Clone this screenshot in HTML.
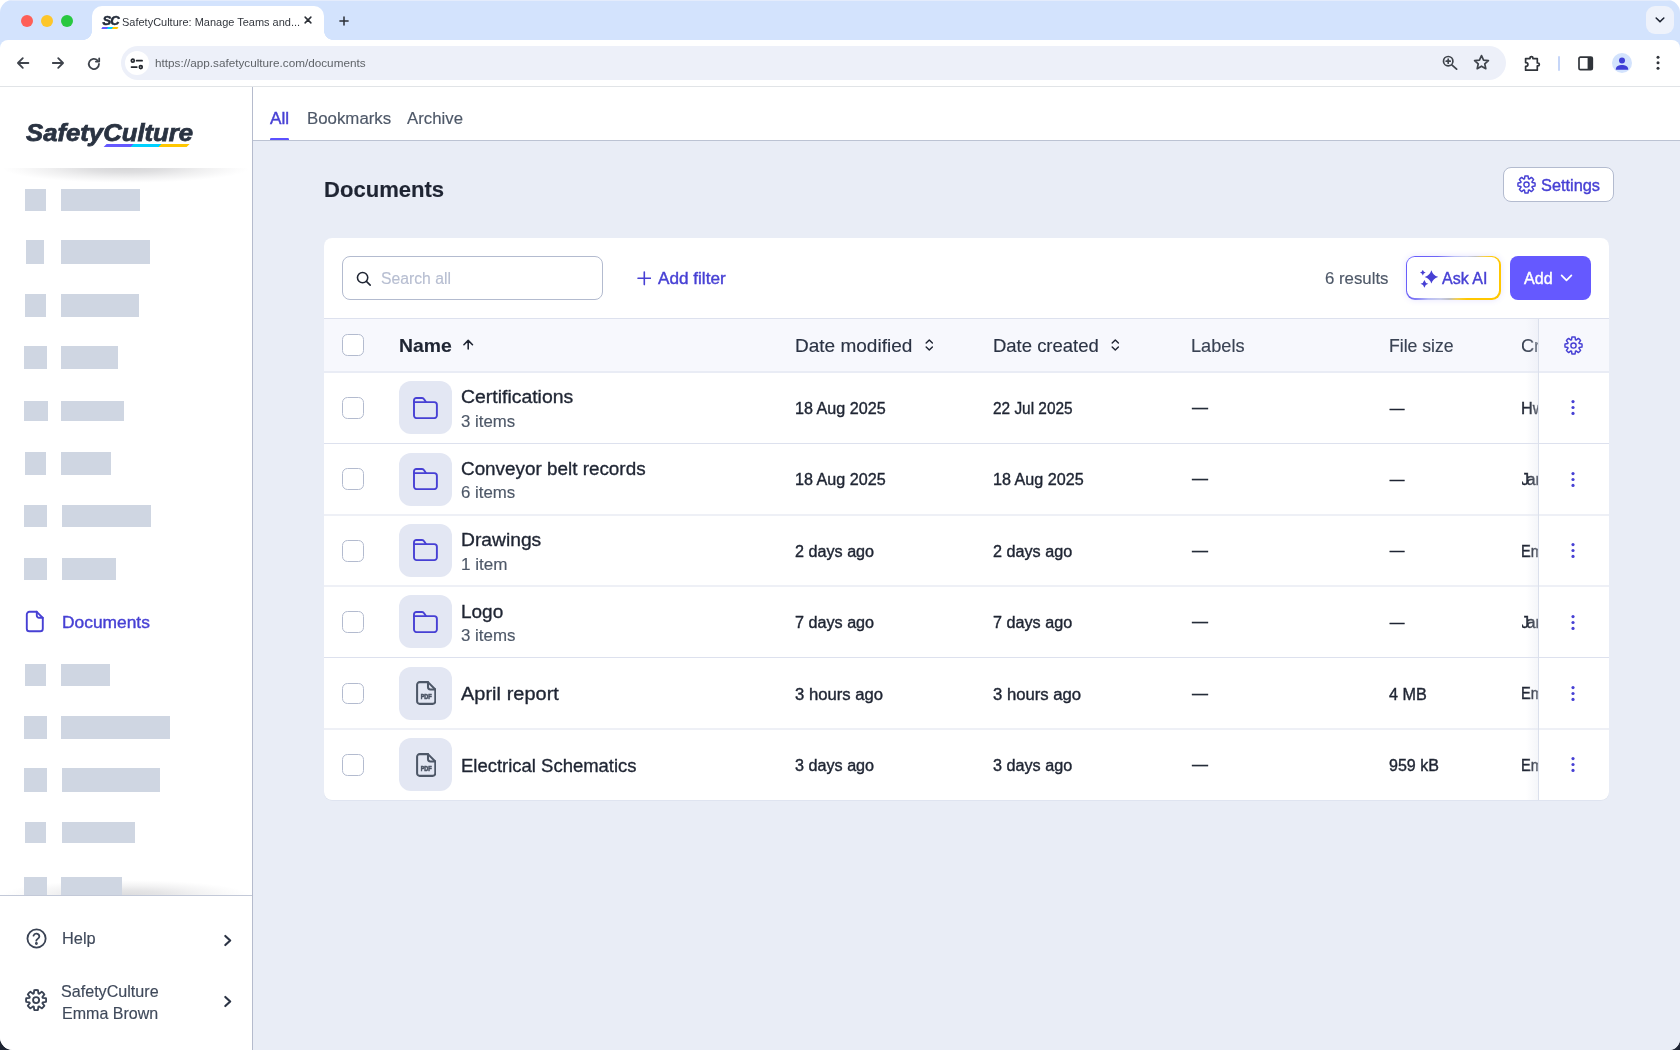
<!DOCTYPE html>
<html lang="en">
<head>
<meta charset="utf-8">
<title>SafetyCulture: Manage Teams and...</title>
<style>
*{box-sizing:border-box;margin:0;padding:0}
html,body{width:1680px;height:1050px;overflow:hidden;background:#fff;font-family:"Liberation Sans",sans-serif;color:#1f2533}
#win{position:absolute;left:0;top:0;width:1680px;height:1050px;overflow:hidden;background:linear-gradient(#fff 0 50%,#1f2533 50%)}
#frame{position:absolute;left:0;top:0;width:1680px;height:1050px;border-radius:12.5px 12.5px 11px 13px;overflow:hidden;background:#fff;will-change:transform}
.abs{position:absolute}
.t{position:absolute;white-space:nowrap;line-height:1;transform-origin:0 50%;-webkit-text-stroke:.15px currentColor}
.med{-webkit-text-stroke:.38px currentColor}
.med2{-webkit-text-stroke:.33px currentColor}
.logo{-webkit-text-stroke:.75px currentColor}
.dash{-webkit-text-stroke:.35px currentColor}
.ns{-webkit-text-stroke:0}
#tabbar{position:absolute;left:0;top:0;width:1680px;height:50px;background:#d3e3fd}
.tl{position:absolute;top:14.5px;width:12.2px;height:12.2px;border-radius:50%}
#tab{position:absolute;left:92.4px;top:6.3px;width:231.8px;height:34px;background:#fff;border-radius:10px 10px 0 0}
#tab:before,#tab:after{content:"";position:absolute;bottom:0;width:9px;height:9px}
#tab:before{left:-9px;background:radial-gradient(circle at 0 0,rgba(255,255,255,0) 8.6px,#fff 9.2px)}
#tab:after{right:-9px;background:radial-gradient(circle at 100% 0,rgba(255,255,255,0) 8.6px,#fff 9.2px)}
#toolbar{position:absolute;left:0;top:40px;width:1680px;height:46px;background:#fff;border-radius:8px 8px 0 0}
#hline{position:absolute;left:0;top:86px;width:1680px;height:1px;background:#e1e4e7}
#urlbar{position:absolute;left:120.6px;top:6px;width:1385px;height:34px;border-radius:17px;background:#edf0f9}
#side{position:absolute;left:0;top:87px;width:252px;height:963px;background:#fff}
#sideborder{position:absolute;left:252px;top:87px;width:1px;height:963px;background:#b5bbcd}
.sk{position:absolute;background:#cfd6e2}
#main{position:absolute;left:253px;top:87px;width:1427px;height:963px;background:#e9edf6}
#tabs{position:absolute;left:253px;top:87px;width:1427px;height:54px;background:#fff;border-bottom:1px solid #bcc3d3}
.btn{border:1px solid #b3bbcf;border-radius:8px;background:#fff}
#card{position:absolute;left:324px;top:238px;width:1285px;height:562px;background:#fff;border-radius:8px;box-shadow:0 .6px 0 0 rgba(205,211,226,.6)}
.cb{width:21.8px;height:21.8px;border:1px solid #b3bbcf;border-radius:5.5px;background:#fff}
</style>
</head>
<body>
<div id="win"><div id="frame">
<header>
<div id="tabbar"><div class="abs" style="left:0;top:0;width:1680px;height:1px;background:#e4ecfc"></div>
<div class="tl" style="left:20.7px;background:#fe5f57"></div>
<div class="tl" style="left:40.7px;background:#fdc62a"></div>
<div class="tl" style="left:60.7px;background:#28c840"></div>
<div id="tab"></div>
<div class="abs" style="left:102px;top:13.5px;width:18px;height:16px">
<span class="abs" style="left:0.6px;top:.4px;font:italic bold 13px/13px 'Liberation Sans',sans-serif;letter-spacing:-1.1px;color:#232b3a;-webkit-text-stroke:.55px #232b3a">SC</span>
<span class="abs" style="left:0.4px;top:13px;width:15.6px;height:1.5px;transform:skewX(-30deg);background:linear-gradient(90deg,#6559ff 0 36%,#00d1ff 36% 68%,#ffc700 68%)"></span>
</div>
<span class="t ns" id="t0" style="left:122.45px;top:16.72px;font-size:11.20px;color:#33373e;transform:scaleX(0.9819);">SafetyCulture: Manage Teams and...</span>
<svg class="abs" style="left:303.30px;top:15.40px" width="10.00" height="10.00" viewBox="0 0 10 10" fill="none" stroke="#2b2f36" stroke-width="1.5" stroke-linecap="round" stroke-linejoin="round"><path d="M2.1 2.1 7.9 7.9M7.9 2.1 2.1 7.9"/></svg>
<svg class="abs" style="left:338.20px;top:14.60px" width="12.00" height="12.00" viewBox="0 0 12 12" fill="none" stroke="#2b2f36" stroke-width="1.5" stroke-linecap="round" stroke-linejoin="round"><path d="M6 1.9V10.1M1.9 6H10.1"/></svg>
<div class="abs" style="left:1646px;top:6px;width:28px;height:27.6px;border-radius:9px;background:#eef2fb"></div>
<svg class="abs" style="left:1654.80px;top:15.40px" width="10.00" height="10.00" viewBox="0 0 10 10" fill="none" stroke="#1f2533" stroke-width="1.6" stroke-linecap="round" stroke-linejoin="round"><path d="M1.2 3 5 6.8 8.8 3"/></svg>
</div>
<div id="toolbar">
<div id="urlbar"></div>
<div class="abs" style="left:125px;top:11px;width:24px;height:24px;border-radius:50%;background:#fff"></div>
</div>
<div id="hline"></div>
<svg class="abs" style="left:15.50px;top:56.25px" width="14.00" height="14.00" viewBox="0 0 14 14" fill="none" stroke="#3f444c" stroke-width="1.8" stroke-linecap="round" stroke-linejoin="round"><path d="M12.4 7H2.1M6.8 2.15 1.95 7l4.85 4.85"/></svg>
<svg class="abs" style="left:51.00px;top:56.25px" width="14.00" height="14.00" viewBox="0 0 14 14" fill="none" stroke="#3f444c" stroke-width="1.8" stroke-linecap="round" stroke-linejoin="round"><path d="M1.8 7h10.1M7.2 2.15 12.05 7l-4.85 4.85"/></svg>
<svg class="abs" style="left:87.40px;top:56.60px" width="14.00" height="14.00" viewBox="0 0 14 14" fill="none" stroke="#3f444c" stroke-width="1.8" stroke-linecap="round" stroke-linejoin="round"><path d="M12 7A5.1 5.1 0 1 1 10.5 3.3"/><path d="M12.2 1.3V4.6H8.9" /></svg>
<svg class="abs" style="left:130.00px;top:56.50px" width="14.00" height="13.00" viewBox="0 0 14 13" fill="none" stroke="#23272e" stroke-width="1.7" stroke-linecap="round" stroke-linejoin="round"><circle cx="2.8" cy="3.65" r="1.45"/><path d="M6.6 3.65H12.1M1.5 10.1H6.8"/><circle cx="10.8" cy="10.1" r="1.45"/></svg>
<span class="t ns" id="t1" style="left:155.01px;top:56.88px;font-size:11.60px;color:#5f6368;transform:scaleX(1.0116);">https://app.safetyculture.com/documents</span>
<svg class="abs" style="left:1441.50px;top:54.90px" width="16.00" height="15.00" viewBox="0 0 16 15" fill="none" stroke="#3f444c" stroke-width="1.7" stroke-linecap="round" stroke-linejoin="round"><circle cx="6.2" cy="6.2" r="4.7"/><path d="M9.8 9.8 14.6 14.2M6.2 4.2V8.2M4.2 6.2H8.2" /></svg>
<svg class="abs" style="left:1473.40px;top:54.20px" width="17.00" height="16.00" viewBox="0 0 17 16" fill="none" stroke="#3f444c" stroke-width="1.7" stroke-linecap="round" stroke-linejoin="round"><path d="M8.5 1.6 10.55 6.1 15.4 6.6 11.75 9.9 12.8 14.7 8.5 12.2 4.2 14.7 5.25 9.9 1.6 6.6 6.45 6.1Z"/></svg>
<svg class="abs" style="left:1523.30px;top:53.60px" width="19.00" height="17.50" viewBox="0 0 19 17.5" fill="none" stroke="#30343a" stroke-width="1.7" stroke-linecap="round" stroke-linejoin="round"><path d="M2.6 4.6H7V4a1.45 1.45 0 0 1 2.9 0V4.6H14.3V9H14.9a1.45 1.45 0 0 1 0 2.9H14.3V16.2H2.6V12.4H3a1.9 1.9 0 0 0 0-3.8H2.6Z"/></svg>
<div class="abs" style="left:1558.2px;top:55.5px;width:1.6px;height:15px;border-radius:1px;background:#c6d6f8"></div>
<svg class="abs" style="left:1578.30px;top:55.60px" width="15.50" height="15.00" viewBox="0 0 15.5 15" ><rect x="1" y="1.2" width="13.3" height="12.4" rx="1.4" fill="none" stroke="#30343a" stroke-width="1.7"/><path d="M9.6 1.2H14.3V13.6H9.6Z" fill="#30343a"/></svg>
<div class="abs" style="left:1612px;top:53px;width:20px;height:20px;border-radius:50%;background:#d3e3fd;overflow:hidden"></div>
<svg class="abs" style="left:1612.00px;top:53.00px" width="20.00" height="20.00" viewBox="0 0 20 20" ><circle cx="10" cy="7.6" r="3" fill="#3f3fd6"/><path d="M3.8 16.2c0-3 3.2-4.2 6.2-4.2s6.2 1.2 6.2 4.2v.6H3.8Z" fill="#3f3fd6"/></svg>
<svg class="abs" style="left:1655.60px;top:54.90px" width="4.00" height="16.00" viewBox="0 0 4 16" fill="#30343a"><circle cx="2" cy="2.3" r="1.5"/><circle cx="2" cy="7.8" r="1.5"/><circle cx="2" cy="13.3" r="1.5"/></svg>
</header>
<aside>
<div id="side">
</div>
<span class="t logo" id="t2" style="left:25.71px;top:120.75px;font-size:24.40px;color:#2a3342;font-weight:700;font-style:italic;transform:scaleX(1.0536);">SafetyCulture</span>
<div class="abs" style="left:105px;top:143.9px;width:83px;height:3.2px;transform:skewX(-45deg);background:linear-gradient(90deg,#6559ff 0 33%,#00d1ff 33% 66%,#ffc700 66%)"></div>
<div class="abs" style="left:0;top:167.6px;width:252px;height:16px;background:radial-gradient(124px 15px at 126px 0,rgba(50,50,60,.2) 0,rgba(50,50,60,.155) 30%,rgba(50,50,60,.075) 62%,rgba(50,50,60,.02) 88%,rgba(50,50,60,0) 100%)"></div>
<div class="sk" style="left:25.0px;top:189.0px;width:20.8px;height:21.5px"></div>
<div class="sk" style="left:61.0px;top:189.0px;width:79.0px;height:21.5px"></div>
<div class="sk" style="left:26.0px;top:240.3px;width:18.0px;height:23.4px"></div>
<div class="sk" style="left:61.0px;top:240.3px;width:89.0px;height:23.4px"></div>
<div class="sk" style="left:25.0px;top:294.0px;width:20.8px;height:22.5px"></div>
<div class="sk" style="left:61.0px;top:294.0px;width:77.8px;height:22.5px"></div>
<div class="sk" style="left:24.0px;top:346.0px;width:23.0px;height:22.5px"></div>
<div class="sk" style="left:61.0px;top:346.0px;width:57.0px;height:22.5px"></div>
<div class="sk" style="left:24.0px;top:401.0px;width:24.0px;height:19.5px"></div>
<div class="sk" style="left:61.0px;top:401.0px;width:62.8px;height:19.5px"></div>
<div class="sk" style="left:25.0px;top:452.0px;width:20.8px;height:22.7px"></div>
<div class="sk" style="left:61.0px;top:452.0px;width:49.8px;height:22.7px"></div>
<div class="sk" style="left:24.0px;top:505.0px;width:23.0px;height:21.5px"></div>
<div class="sk" style="left:62.0px;top:505.0px;width:88.8px;height:21.5px"></div>
<div class="sk" style="left:24.0px;top:558.0px;width:23.0px;height:21.7px"></div>
<div class="sk" style="left:62.0px;top:558.0px;width:53.8px;height:21.7px"></div>
<div class="sk" style="left:25.0px;top:664.0px;width:20.8px;height:21.5px"></div>
<div class="sk" style="left:61.0px;top:664.0px;width:49.0px;height:21.5px"></div>
<div class="sk" style="left:24.0px;top:716.0px;width:23.0px;height:22.5px"></div>
<div class="sk" style="left:61.0px;top:716.0px;width:109.0px;height:22.5px"></div>
<div class="sk" style="left:24.0px;top:768.0px;width:23.0px;height:23.5px"></div>
<div class="sk" style="left:62.0px;top:768.0px;width:98.0px;height:23.5px"></div>
<div class="sk" style="left:25.0px;top:822.3px;width:20.8px;height:21.2px"></div>
<div class="sk" style="left:62.0px;top:822.3px;width:73.0px;height:21.2px"></div>
<div class="sk" style="left:24.0px;top:877.0px;width:23.0px;height:18.0px"></div>
<div class="sk" style="left:61.0px;top:877.0px;width:61.0px;height:18.0px"></div>
<div class="abs" style="left:0;top:879px;width:252px;height:16px;background:radial-gradient(124px 15px at 126px 16px,rgba(50,50,60,.17) 0,rgba(50,50,60,.13) 30%,rgba(50,50,60,.06) 62%,rgba(50,50,60,.015) 88%,rgba(50,50,60,0) 100%)"></div>
<div class="sk" style="left:24.0px;top:877.0px;width:23.0px;height:18.0px"></div>
<div class="sk" style="left:61.0px;top:877.0px;width:61.0px;height:18.0px"></div>
<div class="abs" style="left:0;top:895px;width:252px;height:1px;background:#c3c9d8"></div>
<svg class="abs" style="left:25.20px;top:610.00px" width="19.60" height="22.50" viewBox="0 0 19.6 22.5" fill="none" stroke="#4740d4" stroke-width="1.9" stroke-linecap="round" stroke-linejoin="round"><path d="M11.8 1.8H4.4A2.6 2.6 0 0 0 1.8 4.4V18.7A2.6 2.6 0 0 0 4.4 21.3H15.2A2.6 2.6 0 0 0 17.8 18.7V7.8Z"/><path d="M11.8 1.8V5.6A2.2 2.2 0 0 0 14 7.8H17.8"/></svg>
<span class="t med" id="t3" style="left:61.93px;top:614.33px;font-size:16.15px;color:#4740d4;transform:scaleX(1.0759);">Documents</span>
<svg class="abs" style="left:25.50px;top:928.40px" width="21.00" height="21.00" viewBox="0 0 21 21" fill="none" stroke="#3a4354" stroke-width="1.8" stroke-linecap="round" stroke-linejoin="round"><circle cx="10.55" cy="10.55" r="9.1"/><path d="M7.5 7.7a3 3 0 0 1 5.85.85c0 2-3.05 2.5-3.05 4.1"/><circle cx="10.4" cy="15.5" r=".55" fill="#3a4354"/></svg>
<span class="t" id="t4" style="left:61.98px;top:931.08px;font-size:15.73px;color:#3f495a;transform:scaleX(1.0405);">Help</span>
<svg class="abs" style="left:222.50px;top:933.50px" width="10.00" height="13.00" viewBox="0 0 10 13" fill="none" stroke="#2b3344" stroke-width="2.1" stroke-linecap="round" stroke-linejoin="round"><path d="M2.3 1.9 7.2 6.5 2.3 11.1"/></svg>
<svg class="abs" style="left:25.00px;top:989.40px" width="22.20" height="22.20" viewBox="0 0 22.20 22.20" fill="none" stroke="#3a4354" stroke-width="1.85" stroke-linejoin="round" stroke-linecap="round"><path d="M8.81 4.47L9.25 1.22A10.05 10.05 0 0 1 12.95 1.22L13.39 4.47L14.17 4.80L16.78 2.81A10.05 10.05 0 0 1 19.39 5.42L17.40 8.03L17.73 8.81L20.98 9.25A10.05 10.05 0 0 1 20.98 12.95L17.73 13.39L17.40 14.17L19.39 16.78A10.05 10.05 0 0 1 16.78 19.39L14.17 17.40L13.39 17.73L12.95 20.98A10.05 10.05 0 0 1 9.25 20.98L8.81 17.73L8.03 17.40L5.42 19.39A10.05 10.05 0 0 1 2.81 16.78L4.80 14.17L4.47 13.39L1.22 12.95A10.05 10.05 0 0 1 1.22 9.25L4.47 8.81L4.80 8.03L2.81 5.42A10.05 10.05 0 0 1 5.42 2.81L8.03 4.80Z"/><circle cx="11.10" cy="11.10" r="3.04"/></svg>
<span class="t" id="t5" style="left:61.49px;top:983.78px;font-size:15.73px;color:#3f495a;transform:scaleX(1.0250);">SafetyCulture</span>
<span class="t" id="t6" style="left:62.10px;top:1005.58px;font-size:15.73px;color:#3f495a;transform:scaleX(1.0197);">Emma Brown</span>
<svg class="abs" style="left:222.50px;top:995.30px" width="10.00" height="13.00" viewBox="0 0 10 13" fill="none" stroke="#2b3344" stroke-width="2.1" stroke-linecap="round" stroke-linejoin="round"><path d="M2.3 1.9 7.2 6.5 2.3 11.1"/></svg>
<div id="sideborder"></div>
</aside>
<main>
<div id="main"></div>
<div id="tabs"></div>
<span class="t med" id="t7" style="left:270.34px;top:110.79px;font-size:15.84px;color:#4740d4;transform:scaleX(1.0868);">All</span>
<span class="t" id="t8" style="left:306.56px;top:110.79px;font-size:15.84px;color:#4e5868;transform:scaleX(1.0633);">Bookmarks</span>
<span class="t" id="t9" style="left:406.86px;top:110.79px;font-size:15.84px;color:#4e5868;transform:scaleX(1.0606);">Archive</span>
<div class="abs" style="left:270.4px;top:137.6px;width:18.6px;height:2.9px;border-radius:1.2px 1.2px 0 0;background:#5b50ff"></div>
<span class="t" id="t10" style="left:324.00px;top:179.25px;font-size:21.80px;color:#1f2533;font-weight:700;transform:scaleX(1.0118);">Documents</span>
<div class="abs btn" style="left:1503.2px;top:167px;width:110.6px;height:35.2px"></div>
<svg class="abs" style="left:1517.40px;top:175.40px" width="19.00" height="19.00" viewBox="0 0 19.00 19.00" fill="none" stroke="#4740d4" stroke-width="1.45" stroke-linejoin="round" stroke-linecap="round"><path d="M7.54 3.83L7.92 1.05A8.60 8.60 0 0 1 11.08 1.05L11.46 3.83L12.12 4.10L14.36 2.40A8.60 8.60 0 0 1 16.60 4.64L14.90 6.88L15.17 7.54L17.95 7.92A8.60 8.60 0 0 1 17.95 11.08L15.17 11.46L14.90 12.12L16.60 14.36A8.60 8.60 0 0 1 14.36 16.60L12.12 14.90L11.46 15.17L11.08 17.95A8.60 8.60 0 0 1 7.92 17.95L7.54 15.17L6.88 14.90L4.64 16.60A8.60 8.60 0 0 1 2.40 14.36L4.10 12.12L3.83 11.46L1.05 11.08A8.60 8.60 0 0 1 1.05 7.92L3.83 7.54L4.10 6.88L2.40 4.64A8.60 8.60 0 0 1 4.64 2.40L6.88 4.10Z"/><circle cx="9.50" cy="9.50" r="2.60"/></svg>
<span class="t med" id="t11" style="left:1540.98px;top:177.42px;font-size:16.04px;color:#4740d4;transform:scaleX(1.0189);">Settings</span>
<div id="card"></div>
<div class="abs" style="left:342px;top:256px;width:260.5px;height:43.6px;border:1px solid #b3bbcf;border-radius:8px;background:#fff"></div>
<svg class="abs" style="left:356.00px;top:270.55px" width="16.00" height="16.00" viewBox="0 0 16 16" fill="none" stroke="#1f2533" stroke-width="1.55" stroke-linecap="round" stroke-linejoin="round"><circle cx="6.6" cy="6.6" r="5.15"/><path d="M10.4 10.4 14.2 14.1"/></svg>
<span class="t" id="t12" style="left:381.11px;top:270.99px;font-size:15.84px;color:#b7bed1;transform:scaleX(0.9941);">Search all</span>
<svg class="abs" style="left:636.50px;top:271.30px" width="14.60" height="14.60" viewBox="0 0 14.6 14.6" fill="none" stroke="#4740d4" stroke-width="1.6" stroke-linecap="round" stroke-linejoin="round"><path d="M7.3 1V13.6M1 7.3H13.6"/></svg>
<span class="t med" id="t13" style="left:657.84px;top:270.99px;font-size:15.84px;color:#4740d4;transform:scaleX(1.0840);">Add filter</span>
<span class="t" id="t14" style="left:1324.86px;top:270.99px;font-size:15.84px;color:#4e5868;transform:scaleX(1.0611);">6 results</span>
<div class="abs" style="left:1405.6px;top:256px;width:95px;height:43.8px;border-radius:9px;background:linear-gradient(122deg,#6559ff 0%,#6f66f5 26%,#b9bdf5 40%,#c9cdea 50%,#bfc0c4 57%,#f5d04a 64%,#ffc700 72%,#ffc700 100%);box-shadow:0 0 6px rgba(101,89,255,.16)"><div class="abs" style="left:1.4px;top:1.4px;right:1.4px;bottom:1.4px;border-radius:7.6px;background:#fff"></div></div>
<svg class="abs" style="left:1420.00px;top:269.80px" width="18.40" height="18.20" viewBox="0 0 18.4 18.2" fill="#4740d4"><path d="M11.40 0.20Q13.01 5.29 18.10 6.90Q13.01 8.51 11.40 13.60Q9.79 8.51 4.70 6.90Q9.79 5.29 11.40 0.20Z"/><path d="M2.80 -0.30Q3.38 2.02 5.70 2.60Q3.38 3.18 2.80 5.50Q2.22 3.18 -0.10 2.60Q2.22 2.02 2.80 -0.30Z"/><path d="M4.40 9.90Q5.18 13.02 8.30 13.80Q5.18 14.58 4.40 17.70Q3.62 14.58 0.50 13.80Q3.62 13.02 4.40 9.90Z"/></svg>
<span class="t med" id="t15" style="left:1442.40px;top:270.99px;font-size:15.84px;color:#4740d4;transform:scaleX(1.0141);">Ask AI</span>
<div class="abs" style="left:1509.7px;top:256px;width:81.2px;height:43.8px;border-radius:8px;background:#6559ff"></div>
<span class="t med" id="t16" style="left:1524.10px;top:270.99px;font-size:15.84px;color:#fff;transform:scaleX(1.0155);">Add</span>
<svg class="abs" style="left:1560.10px;top:273.30px" width="13.00" height="10.00" viewBox="0 0 13 10" fill="none" stroke="#fff" stroke-width="1.7" stroke-linecap="round" stroke-linejoin="round"><path d="M1.6 2.4 6.5 7.4 11.4 2.4"/></svg>
<div class="abs" style="left:324px;top:318px;width:1285px;height:1px;background:#dde1ee"></div>
<div class="abs" style="left:324px;top:319px;width:1285px;height:52px;background:#f7f8fd"></div>
<div class="abs" style="left:324px;top:371px;width:1285px;height:2px;background:#e9ecf5"></div>
<div class="abs cb" style="left:342.2px;top:334.1px"></div>
<span class="t" id="t17" style="left:399.23px;top:337.83px;font-size:17.80px;color:#1f2533;font-weight:700;transform:scaleX(1.0888);">Name</span>
<svg class="abs" style="left:461.90px;top:339.30px" width="12.40" height="11.60" viewBox="0 0 12.4 11.6" fill="none" stroke="#1f2533" stroke-width="1.55" stroke-linecap="round" stroke-linejoin="round"><path d="M6.2 10V1.5M1.9 5.8 6.2 1.35 10.5 5.8"/></svg>
<span class="t" id="t18" style="left:795.35px;top:337.91px;font-size:17.59px;color:#2b3344;transform:scaleX(1.0814);">Date modified</span>
<svg class="abs" style="left:924.80px;top:339.00px" width="8.60" height="12.20" viewBox="0 0 8.6 12.2" fill="none" stroke="#1f2533" stroke-width="1.45" stroke-linecap="round" stroke-linejoin="round"><path d="M1.2 4.1 4.3 1.1 7.4 4.1M1.2 8 4.3 11 7.4 8"/></svg>
<span class="t" id="t19" style="left:993.28px;top:337.91px;font-size:17.59px;color:#2b3344;transform:scaleX(1.0506);">Date created</span>
<svg class="abs" style="left:1111.40px;top:339.00px" width="8.60" height="12.20" viewBox="0 0 8.6 12.2" fill="none" stroke="#1f2533" stroke-width="1.45" stroke-linecap="round" stroke-linejoin="round"><path d="M1.2 4.1 4.3 1.1 7.4 4.1M1.2 8 4.3 11 7.4 8"/></svg>
<span class="t" id="t20" style="left:1191.09px;top:337.91px;font-size:17.59px;color:#3a4354;transform:scaleX(1.0329);">Labels</span>
<span class="t" id="t21" style="left:1388.82px;top:337.91px;font-size:17.59px;color:#3a4354;transform:scaleX(1.0030);">File size</span>
<div class="abs" style="left:1521.5px;top:332px;width:17px;height:28px;overflow:hidden"><span class="t" id="t22" style="left:-0.91px;top:5.91px;font-size:17.59px;color:#3a4354;transform:scaleX(1.0328);">Created by</span></div>
<div class="abs cb" style="left:342.2px;top:397.0px"></div>
<div class="abs" style="left:399.2px;top:381.2px;width:52.8px;height:53px;border-radius:12px;background:#e3e7f3"></div>
<svg class="abs" style="left:413.10px;top:396.60px" width="25.20" height="22.30" viewBox="0 0 25.2 22.3" fill="none" stroke="#4740d4" stroke-width="1.9" stroke-linecap="round" stroke-linejoin="round"><path d="M1 18.5V3.3A2.3 2.3 0 0 1 3.3 1H9.1a2.3 2.3 0 0 1 2 1.15L12.9 5.1H21.3A2.6 2.6 0 0 1 23.9 7.7V18.5A2.6 2.6 0 0 1 21.3 21.1H3.6A2.6 2.6 0 0 1 1 18.5Z"/><path d="M1 5.1H12.9"/></svg>
<span class="t med2" id="t23" style="left:460.73px;top:388.47px;font-size:18.11px;color:#1f2533;transform:scaleX(1.0723);">Certifications</span>
<span class="t" id="t24" style="left:460.56px;top:413.89px;font-size:15.84px;color:#4e5868;transform:scaleX(1.0597);">3 items</span>
<span class="t med" id="t25" style="left:794.99px;top:400.94px;font-size:15.84px;color:#1f2533;transform:scaleX(1.0192);">18 Aug 2025</span>
<span class="t med" id="t26" style="left:992.83px;top:400.94px;font-size:15.84px;color:#1f2533;transform:scaleX(0.9729);">22 Jul 2025</span>
<span class="t dash" style="left:1192px;top:400.0px;font-size:16px">—</span>
<span class="t dash" style="left:1389.7px;top:400.6px;font-size:14.7px">—</span>
<div class="abs" style="left:1521.5px;top:393.5px;width:16.8px;height:28px;overflow:hidden"><span class="t med" style="left:-.4px;top:7.4px;font-size:15.84px;transform:scaleX(1.03)">Hwang</span></div>
<svg class="abs" style="left:1571.40px;top:399.40px" width="4.00" height="17.00" viewBox="0 0 4 17" fill="#4740d4"><circle cx="2" cy="2.6" r="1.6"/><circle cx="2" cy="8.5" r="1.6"/><circle cx="2" cy="14.4" r="1.6"/></svg>
<div class="abs" style="left:324px;top:443px;width:1285px;height:1px;background:#dde1ee"></div>
<div class="abs cb" style="left:342.2px;top:468.4px"></div>
<div class="abs" style="left:399.2px;top:452.6px;width:52.8px;height:53px;border-radius:12px;background:#e3e7f3"></div>
<svg class="abs" style="left:413.10px;top:468.00px" width="25.20" height="22.30" viewBox="0 0 25.2 22.3" fill="none" stroke="#4740d4" stroke-width="1.9" stroke-linecap="round" stroke-linejoin="round"><path d="M1 18.5V3.3A2.3 2.3 0 0 1 3.3 1H9.1a2.3 2.3 0 0 1 2 1.15L12.9 5.1H21.3A2.6 2.6 0 0 1 23.9 7.7V18.5A2.6 2.6 0 0 1 21.3 21.1H3.6A2.6 2.6 0 0 1 1 18.5Z"/><path d="M1 5.1H12.9"/></svg>
<span class="t med2" id="t27" style="left:460.76px;top:459.87px;font-size:18.11px;color:#1f2533;transform:scaleX(1.0419);">Conveyor belt records</span>
<span class="t" id="t28" style="left:460.56px;top:485.29px;font-size:15.84px;color:#4e5868;transform:scaleX(1.0638);">6 items</span>
<span class="t med" id="t29" style="left:794.99px;top:472.34px;font-size:15.84px;color:#1f2533;transform:scaleX(1.0192);">18 Aug 2025</span>
<span class="t med" id="t30" style="left:992.79px;top:472.34px;font-size:15.84px;color:#1f2533;transform:scaleX(1.0204);">18 Aug 2025</span>
<span class="t dash" style="left:1192px;top:471.4px;font-size:16px">—</span>
<span class="t dash" style="left:1389.7px;top:472.0px;font-size:14.7px">—</span>
<div class="abs" style="left:1521.5px;top:464.9px;width:16.8px;height:28px;overflow:hidden"><span class="t med" style="left:-.4px;top:7.4px;font-size:15.84px;transform:scaleX(1.03)"><span style="margin-right:-2.6px">J</span>ared</span></div>
<svg class="abs" style="left:1571.40px;top:470.80px" width="4.00" height="17.00" viewBox="0 0 4 17" fill="#4740d4"><circle cx="2" cy="2.6" r="1.6"/><circle cx="2" cy="8.5" r="1.6"/><circle cx="2" cy="14.4" r="1.6"/></svg>
<div class="abs" style="left:324px;top:514px;width:1285px;height:2px;background:#eef0f6"></div>
<div class="abs cb" style="left:342.2px;top:539.8px"></div>
<div class="abs" style="left:399.2px;top:524.0px;width:52.8px;height:53px;border-radius:12px;background:#e3e7f3"></div>
<svg class="abs" style="left:413.10px;top:539.40px" width="25.20" height="22.30" viewBox="0 0 25.2 22.3" fill="none" stroke="#4740d4" stroke-width="1.9" stroke-linecap="round" stroke-linejoin="round"><path d="M1 18.5V3.3A2.3 2.3 0 0 1 3.3 1H9.1a2.3 2.3 0 0 1 2 1.15L12.9 5.1H21.3A2.6 2.6 0 0 1 23.9 7.7V18.5A2.6 2.6 0 0 1 21.3 21.1H3.6A2.6 2.6 0 0 1 1 18.5Z"/><path d="M1 5.1H12.9"/></svg>
<span class="t med2" id="t31" style="left:460.74px;top:531.27px;font-size:18.11px;color:#1f2533;transform:scaleX(1.0628);">Drawings</span>
<span class="t" id="t32" style="left:460.55px;top:556.69px;font-size:15.84px;color:#4e5868;transform:scaleX(1.0789);">1 item</span>
<span class="t med" id="t33" style="left:794.99px;top:543.74px;font-size:15.84px;color:#1f2533;transform:scaleX(1.0215);">2 days ago</span>
<span class="t med" id="t34" style="left:992.79px;top:543.74px;font-size:15.84px;color:#1f2533;transform:scaleX(1.0228);">2 days ago</span>
<span class="t dash" style="left:1192px;top:542.8px;font-size:16px">—</span>
<span class="t dash" style="left:1389.7px;top:543.4px;font-size:14.7px">—</span>
<div class="abs" style="left:1521.5px;top:536.3px;width:16.8px;height:28px;overflow:hidden"><span class="t med" style="left:-.4px;top:7.4px;font-size:15.84px;transform:scaleX(.93)">Emma</span></div>
<svg class="abs" style="left:1571.40px;top:542.20px" width="4.00" height="17.00" viewBox="0 0 4 17" fill="#4740d4"><circle cx="2" cy="2.6" r="1.6"/><circle cx="2" cy="8.5" r="1.6"/><circle cx="2" cy="14.4" r="1.6"/></svg>
<div class="abs" style="left:324px;top:585px;width:1285px;height:2px;background:#eef0f6"></div>
<div class="abs cb" style="left:342.2px;top:611.2px"></div>
<div class="abs" style="left:399.2px;top:595.4px;width:52.8px;height:53px;border-radius:12px;background:#e3e7f3"></div>
<svg class="abs" style="left:413.10px;top:610.80px" width="25.20" height="22.30" viewBox="0 0 25.2 22.3" fill="none" stroke="#4740d4" stroke-width="1.9" stroke-linecap="round" stroke-linejoin="round"><path d="M1 18.5V3.3A2.3 2.3 0 0 1 3.3 1H9.1a2.3 2.3 0 0 1 2 1.15L12.9 5.1H21.3A2.6 2.6 0 0 1 23.9 7.7V18.5A2.6 2.6 0 0 1 21.3 21.1H3.6A2.6 2.6 0 0 1 1 18.5Z"/><path d="M1 5.1H12.9"/></svg>
<span class="t med2" id="t35" style="left:460.75px;top:602.67px;font-size:18.11px;color:#1f2533;transform:scaleX(1.0471);">Logo</span>
<span class="t" id="t36" style="left:460.55px;top:628.09px;font-size:15.84px;color:#4e5868;transform:scaleX(1.0678);">3 items</span>
<span class="t med" id="t37" style="left:794.99px;top:615.14px;font-size:15.84px;color:#1f2533;transform:scaleX(1.0215);">7 days ago</span>
<span class="t med" id="t38" style="left:992.79px;top:615.14px;font-size:15.84px;color:#1f2533;transform:scaleX(1.0228);">7 days ago</span>
<span class="t dash" style="left:1192px;top:614.2px;font-size:16px">—</span>
<span class="t dash" style="left:1389.7px;top:614.8px;font-size:14.7px">—</span>
<div class="abs" style="left:1521.5px;top:607.7px;width:16.8px;height:28px;overflow:hidden"><span class="t med" style="left:-.4px;top:7.4px;font-size:15.84px;transform:scaleX(1.03)"><span style="margin-right:-2.6px">J</span>ared</span></div>
<svg class="abs" style="left:1571.40px;top:613.60px" width="4.00" height="17.00" viewBox="0 0 4 17" fill="#4740d4"><circle cx="2" cy="2.6" r="1.6"/><circle cx="2" cy="8.5" r="1.6"/><circle cx="2" cy="14.4" r="1.6"/></svg>
<div class="abs" style="left:324px;top:657px;width:1285px;height:1px;background:#dde1ee"></div>
<div class="abs cb" style="left:342.2px;top:682.6px"></div>
<div class="abs" style="left:399.2px;top:666.8px;width:52.8px;height:53px;border-radius:12px;background:#e3e7f3"></div>
<svg class="abs" style="left:415.70px;top:681.20px" width="20.40" height="24.00" viewBox="0 0 20.4 24" fill="none" stroke="#4d5767" stroke-width="2.05" stroke-linecap="round" stroke-linejoin="round"><path d="M12 1.1H3.7A2.6 2.6 0 0 0 1.1 3.7V20.3A2.6 2.6 0 0 0 3.7 22.9H16.7A2.6 2.6 0 0 0 19.3 20.3V8.4Z"/><path d="M12 1.1V6A2.4 2.4 0 0 0 14.4 8.4H19.3"/><text transform="translate(10.2 18.5) scale(.83 1)" text-anchor="middle" font-family="Liberation Sans,sans-serif" font-weight="700" font-size="6.7" fill="#4a5363" stroke="#4a5363" stroke-width=".6" stroke-linejoin="miter">PDF</text></svg>
<span class="t med2" id="t39" style="left:460.60px;top:685.27px;font-size:18.11px;color:#1f2533;letter-spacing:0.038px;transform:scaleX(1.1000);">April report</span>
<span class="t med" id="t40" style="left:794.97px;top:686.54px;font-size:15.84px;color:#1f2533;transform:scaleX(1.0521);">3 hours ago</span>
<span class="t med" id="t41" style="left:992.77px;top:686.54px;font-size:15.84px;color:#1f2533;transform:scaleX(1.0533);">3 hours ago</span>
<span class="t dash" style="left:1192px;top:685.6px;font-size:16px">—</span>
<span class="t med" id="t42" style="left:1389.09px;top:686.54px;font-size:15.84px;color:#1f2533;transform:scaleX(1.0235);">4 MB</span>
<div class="abs" style="left:1521.5px;top:679.1px;width:16.8px;height:28px;overflow:hidden"><span class="t med" style="left:-.4px;top:7.4px;font-size:15.84px;transform:scaleX(.93)">Emma</span></div>
<svg class="abs" style="left:1571.40px;top:685.00px" width="4.00" height="17.00" viewBox="0 0 4 17" fill="#4740d4"><circle cx="2" cy="2.6" r="1.6"/><circle cx="2" cy="8.5" r="1.6"/><circle cx="2" cy="14.4" r="1.6"/></svg>
<div class="abs" style="left:324px;top:728px;width:1285px;height:2px;background:#eef0f6"></div>
<div class="abs cb" style="left:342.2px;top:754.0px"></div>
<div class="abs" style="left:399.2px;top:738.2px;width:52.8px;height:53px;border-radius:12px;background:#e3e7f3"></div>
<svg class="abs" style="left:415.70px;top:752.60px" width="20.40" height="24.00" viewBox="0 0 20.4 24" fill="none" stroke="#4d5767" stroke-width="2.05" stroke-linecap="round" stroke-linejoin="round"><path d="M12 1.1H3.7A2.6 2.6 0 0 0 1.1 3.7V20.3A2.6 2.6 0 0 0 3.7 22.9H16.7A2.6 2.6 0 0 0 19.3 20.3V8.4Z"/><path d="M12 1.1V6A2.4 2.4 0 0 0 14.4 8.4H19.3"/><text transform="translate(10.2 18.5) scale(.83 1)" text-anchor="middle" font-family="Liberation Sans,sans-serif" font-weight="700" font-size="6.7" fill="#4a5363" stroke="#4a5363" stroke-width=".6" stroke-linejoin="miter">PDF</text></svg>
<span class="t med2" id="t43" style="left:460.68px;top:756.67px;font-size:18.11px;color:#1f2533;transform:scaleX(1.0201);">Electrical Schematics</span>
<span class="t med" id="t44" style="left:794.99px;top:757.94px;font-size:15.84px;color:#1f2533;transform:scaleX(1.0215);">3 days ago</span>
<span class="t med" id="t45" style="left:992.79px;top:757.94px;font-size:15.84px;color:#1f2533;transform:scaleX(1.0228);">3 days ago</span>
<span class="t dash" style="left:1192px;top:757.0px;font-size:16px">—</span>
<span class="t med" id="t46" style="left:1389.10px;top:757.94px;font-size:15.84px;color:#1f2533;transform:scaleX(1.0147);">959 kB</span>
<div class="abs" style="left:1521.5px;top:750.5px;width:16.8px;height:28px;overflow:hidden"><span class="t med" style="left:-.4px;top:7.4px;font-size:15.84px;transform:scaleX(.93)">Emma</span></div>
<svg class="abs" style="left:1571.40px;top:756.40px" width="4.00" height="17.00" viewBox="0 0 4 17" fill="#4740d4"><circle cx="2" cy="2.6" r="1.6"/><circle cx="2" cy="8.5" r="1.6"/><circle cx="2" cy="14.4" r="1.6"/></svg>
<div class="abs" style="left:1526px;top:319px;width:12px;height:481px;background:linear-gradient(90deg,rgba(255,255,255,0),rgba(226,230,240,.35))"></div>
<div class="abs" style="left:1538.2px;top:319px;width:1px;height:481px;background:#dbe0ec"></div>
<svg class="abs" style="left:1563.90px;top:335.80px" width="19.00" height="19.00" viewBox="0 0 19.00 19.00" fill="none" stroke="#4740d4" stroke-width="1.45" stroke-linejoin="round" stroke-linecap="round"><path d="M7.54 3.83L7.92 1.05A8.60 8.60 0 0 1 11.08 1.05L11.46 3.83L12.12 4.10L14.36 2.40A8.60 8.60 0 0 1 16.60 4.64L14.90 6.88L15.17 7.54L17.95 7.92A8.60 8.60 0 0 1 17.95 11.08L15.17 11.46L14.90 12.12L16.60 14.36A8.60 8.60 0 0 1 14.36 16.60L12.12 14.90L11.46 15.17L11.08 17.95A8.60 8.60 0 0 1 7.92 17.95L7.54 15.17L6.88 14.90L4.64 16.60A8.60 8.60 0 0 1 2.40 14.36L4.10 12.12L3.83 11.46L1.05 11.08A8.60 8.60 0 0 1 1.05 7.92L3.83 7.54L4.10 6.88L2.40 4.64A8.60 8.60 0 0 1 4.64 2.40L6.88 4.10Z"/><circle cx="9.50" cy="9.50" r="2.60"/></svg>
</main>
</div></div>
</body>
</html>
